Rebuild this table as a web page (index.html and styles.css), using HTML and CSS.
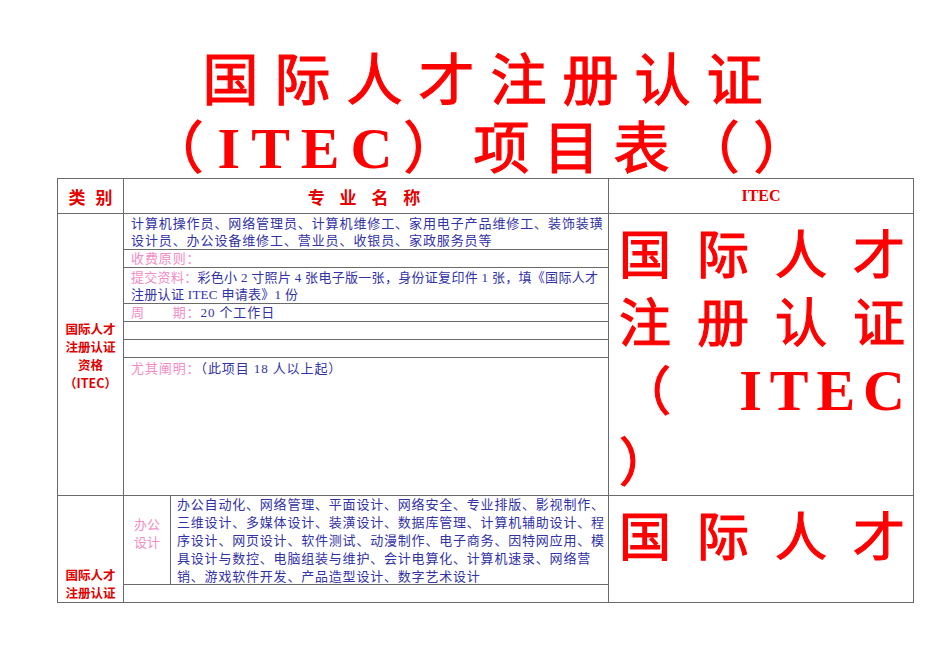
FILE: index.html
```html
<!DOCTYPE html>
<html lang="zh-CN">
<head>
<meta charset="utf-8">
<title>国际人才注册认证（ITEC）项目表</title>
<link rel="stylesheet" href="styles.css">
</head>
<body>
<div class="page">
  <div class="title">
    <div class="t1">国际人才注册认证</div>
    <div class="t2">（<span class="latin">ITEC</span>）项目表（）</div>
  </div>
  <div class="sheet">
    <div class="c hd h-cat">类 别</div>
    <div class="c hd h-name">专 业 名 称</div>
    <div class="c hd h-itec">ITEC</div>

    <div class="c cat cat1">国际人才<br>注册认证<br>资格<br>（ITEC）</div>
    <div class="c txt r-a">计算机操作员、网络管理员、计算机维修工、家用电子产品维修工、装饰装璜<br>设计员、办公设备维修工、营业员、收银员、家政服务员等</div>
    <div class="c txt r-b"><span class="lbl">收费原则：</span></div>
    <div class="c txt r-c"><span class="lbl">提交资料：</span>彩色小 2 寸照片 4 张电子版一张，身份证复印件 1 张，填《国际人才<br>注册认证 ITEC 申请表》1 份</div>
    <div class="c txt r-d"><span class="lbl">周　　期：</span>20 个工作日</div>
    <div class="c txt r-e"></div>
    <div class="c txt r-f"></div>
    <div class="c txt r-g"><span class="lbl">尤其阐明：</span>（此项目 18 人以上起）</div>
    <div class="c big big1">
      <div class="bl">国际人才</div>
      <div class="bl">注册认证</div>
      <div class="bl">（ <span class="latin">ITEC</span></div>
      <div class="bl last">）</div>
    </div>

    <div class="c cat cat2">国际人才<br>注册认证</div>
    <div class="c sub">办公<br>设计</div>
    <div class="c txt r-h">办公自动化、网络管理、平面设计、网络安全、专业排版、影视制作、<br>三维设计、多媒体设计、装潢设计、数据库管理、计算机辅助设计、程<br>序设计、网页设计、软件测试、动漫制作、电子商务、因特网应用、模<br>具设计与数控、电脑组装与维护、会计电算化、计算机速录、网络营<br>销、游戏软件开发、产品造型设计、数字艺术设计</div>
    <div class="c txt r-i"></div>
    <div class="c big big2">
      <div class="bl">国际人才</div>
    </div>
  </div>
</div>
</body>
</html>
```

FILE: styles.css
```css
html, body {
  margin: 0;
  padding: 0;
  background: #ffffff;
}

body {
  width: 950px;
  height: 672px;
  overflow: hidden;
  font-family: "Liberation Serif", "Noto Sans CJK SC", serif;
}

.page {
  padding-left: 57px;
}

.title {
  width: 857px;
  height: 178px;
  box-sizing: border-box;
  padding-top: 41px;
  color: #ff0000;
  font-family: "Noto Sans CJK SC", sans-serif;
  font-weight: 400;
  -webkit-text-stroke: 1.2px #ff0000;
  text-align: center;
}

.t1 {
  font-size: 56px;
  line-height: 69px;
  letter-spacing: 16px;
  padding-left: 10px;
}

.t2 {
  font-size: 56px;
  line-height: 68px;
  letter-spacing: 14px;
}

.latin {
  font-family: "Liberation Serif", serif;
  font-weight: 700;
  -webkit-text-stroke: 0;
}

.t2 .latin {
  font-size: 58px;
  letter-spacing: 11px;
}

.sheet {
  display: grid;
  grid-template-columns: 66px 47px 438px 305px;
  grid-template-rows: 35px 36px 18px 36px 18px 18px 18px 138px 89px 18px;
  border-top: 1px solid #6a6a6a;
  border-left: 1px solid #6a6a6a;
  width: 856px;
}

.c {
  box-sizing: border-box;
  border-right: 1px solid #6a6a6a;
  border-bottom: 1px solid #6a6a6a;
  overflow: hidden;
}

.hd {
  color: #e60000;
  font-family: "Noto Sans CJK SC", sans-serif;
  font-weight: 700;
  font-size: 17px;
  display: flex;
  align-items: center;
  justify-content: center;
}

.h-cat {
  grid-column: 1;
  grid-row: 1;
  letter-spacing: 3px;
  padding-left: 3px;
}

.h-name {
  grid-column: 2 / 4;
  grid-row: 1;
  letter-spacing: 4px;
  word-spacing: 3px;
}

.h-itec {
  grid-column: 4;
  grid-row: 1;
  font-family: "Liberation Serif", serif;
  font-size: 16px;
}

.cat {
  grid-column: 1;
  color: #e00000;
  font-family: "Noto Sans CJK SC", sans-serif;
  font-weight: 700;
  font-size: 12.5px;
  line-height: 18px;
  text-align: center;
}

.cat1 {
  grid-row: 2 / 9;
  display: flex;
  align-items: center;
  justify-content: center;
  padding-top: 2px;
}

.cat2 {
  grid-row: 9 / 11;
  display: flex;
  align-items: flex-end;
  justify-content: center;
}

.txt {
  grid-column: 2 / 4;
  color: #3232a6;
  font-size: 13px;
  line-height: 17px;
  letter-spacing: 0.9px;
  padding: 1px 4px 0 7px;
  white-space: nowrap;
}

.lbl {
  color: #f38cc6;
}

.r-a { grid-row: 2; }
.r-b { grid-row: 3; line-height: 16px; }
.r-c { grid-row: 4; letter-spacing: 0.3px; }
.r-d { grid-row: 5; line-height: 16px; }
.r-e { grid-row: 6; }
.r-f { grid-row: 7; }
.r-g { grid-row: 8; padding-top: 2px; }

.sub {
  grid-column: 2;
  grid-row: 9;
  color: #f38cc6;
  font-family: "Noto Sans CJK SC", sans-serif;
  font-size: 13px;
  line-height: 18px;
  display: flex;
  align-items: center;
  justify-content: center;
  text-align: center;
  padding-bottom: 14px;
}

.r-h {
  grid-column: 3;
  grid-row: 9;
  line-height: 18px;
  letter-spacing: 0.8px;
  padding: 0 2px 0 6px;
}

.r-i {
  grid-column: 2 / 4;
  grid-row: 10;
}

.big {
  grid-column: 4;
  color: #ff0000;
  font-family: "Noto Sans CJK SC", sans-serif;
  font-weight: 400;
  -webkit-text-stroke: 1.2px #ff0000;
  font-size: 52px;
  line-height: 68px;
  padding: 4px 8px 0 10px;
}

.big1 { grid-row: 2 / 9; }
.big2 { grid-row: 9 / 11; }

.bl {
  text-align: justify;
  text-align-last: justify;
  white-space: nowrap;
}

.bl.last {
  text-align: left;
  text-align-last: left;
}

.big .latin {
  font-size: 58px;
  letter-spacing: 8px;
  margin-right: -8px;
}
```
